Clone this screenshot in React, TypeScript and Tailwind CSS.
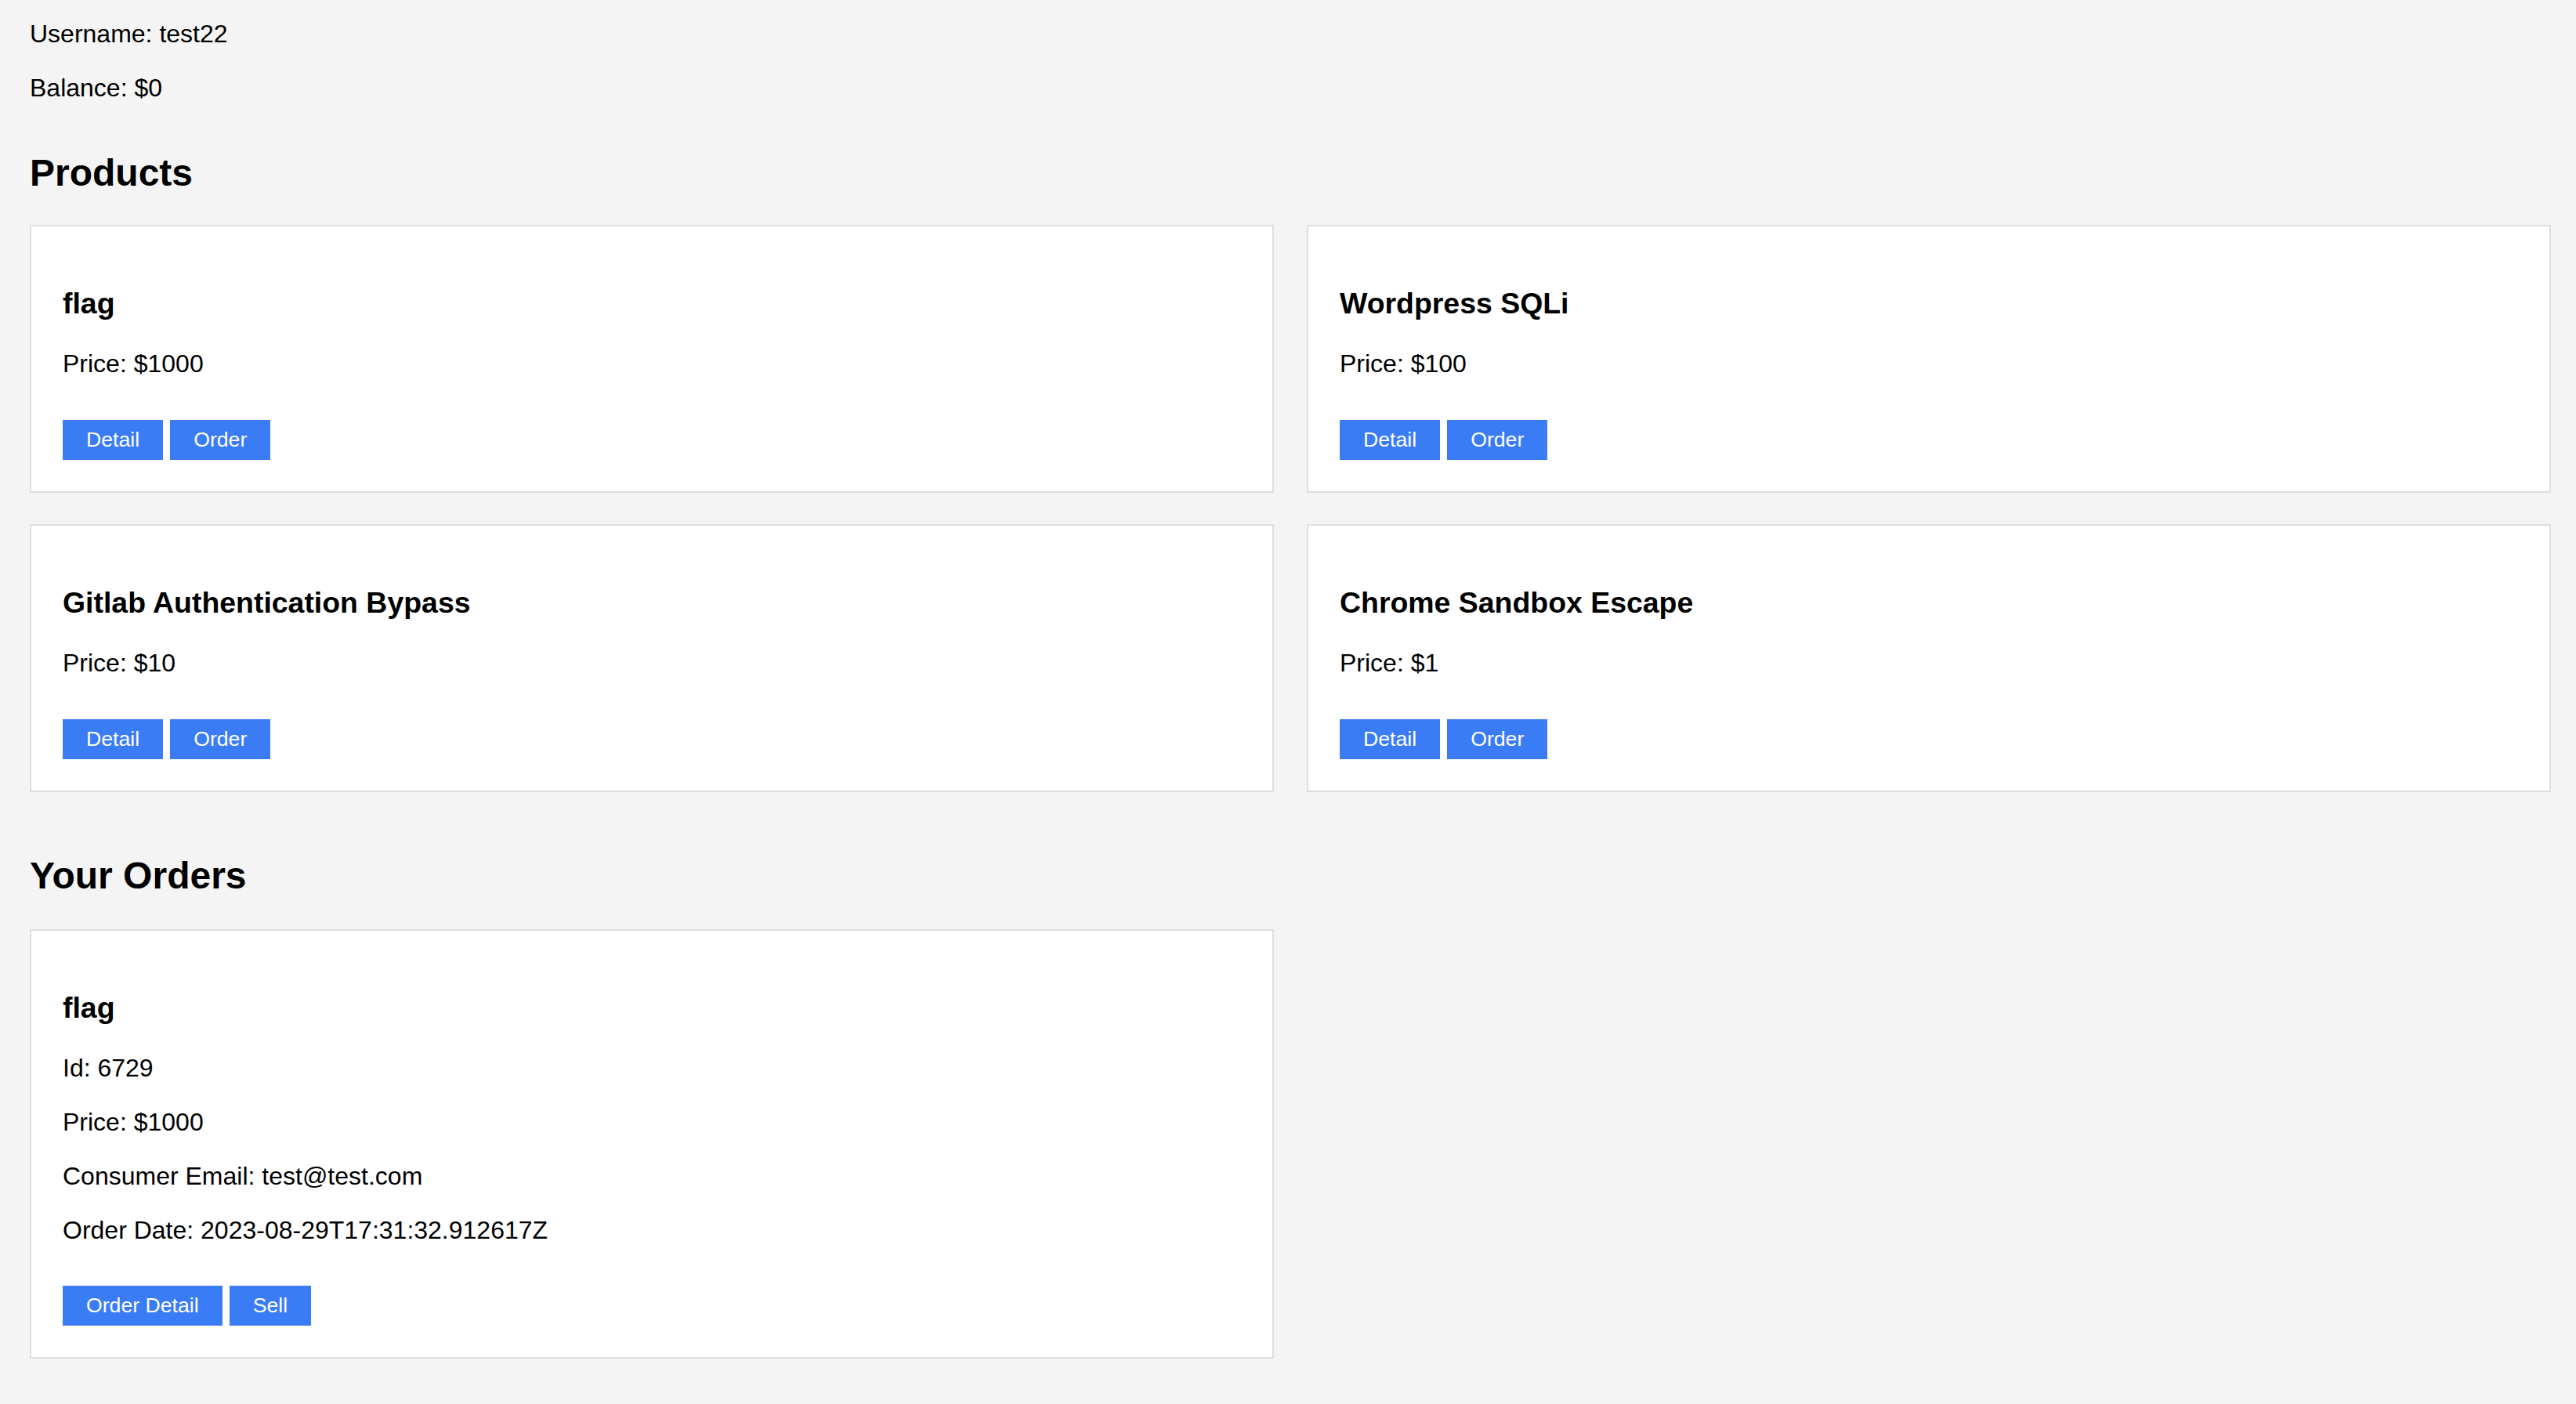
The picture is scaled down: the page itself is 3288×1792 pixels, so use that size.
import React from "react";

const products = [
  { name: "flag", price: 1000 },
  { name: "Wordpress SQLi", price: 100 },
  { name: "Gitlab Authentication Bypass", price: 10 },
  { name: "Chrome Sandbox Escape", price: 1 },
];

function Btn({ children }: { children: React.ReactNode }) {
  return (
    <button className="bg-[#3a7cf6] text-white text-[26.667px] leading-[31px] py-[10px] px-[30px] cursor-pointer">
      {children}
    </button>
  );
}

export default function App() {
  return (
    <div
      className="min-h-screen bg-[#f4f4f4] text-black pl-[38px] pr-[32px] pt-[25px] pb-[40px] text-[32px] leading-[37px]"
      style={{ fontFamily: '"Liberation Sans", Arial, sans-serif' }}
    >
      <p>Username: test22</p>
      <p className="mt-[32px]">Balance: $0</p>

      <h2 className="mt-[62px] text-[48px] leading-[55px] font-bold">Products</h2>

      <div className="mt-[39px] grid grid-cols-2 gap-x-[42px] gap-y-[40px]">
        {products.map((p) => (
          <div key={p.name} className="bg-white border-2 border-[#dedede] px-[40px] pt-[77px] pb-[40px]">
            <h3 className="text-[37.44px] leading-[43px] font-bold">{p.name}</h3>
            <p className="mt-[37px]">Price: ${p.price}</p>
            <div className="mt-[53px] flex gap-[9px]">
              <Btn>Detail</Btn>
              <Btn>Order</Btn>
            </div>
          </div>
        ))}
      </div>

      <h2 className="mt-[79px] text-[48px] leading-[55px] font-bold">Your Orders</h2>

      <div className="mt-[41px] grid grid-cols-2 gap-x-[42px]">
        <div className="bg-white border-2 border-[#dedede] px-[40px] pt-[77px] pb-[40px]">
          <h3 className="text-[37.44px] leading-[43px] font-bold">flag</h3>
          <p className="mt-[37px]">Id: 6729</p>
          <p className="mt-[32px]">Price: $1000</p>
          <p className="mt-[32px]">Consumer Email: test@test.com</p>
          <p className="mt-[32px]">Order Date: 2023-08-29T17:31:32.912617Z</p>
          <div className="mt-[52px] flex gap-[9px]">
            <Btn>Order Detail</Btn>
            <Btn>Sell</Btn>
          </div>
        </div>
      </div>
    </div>
  );
}
